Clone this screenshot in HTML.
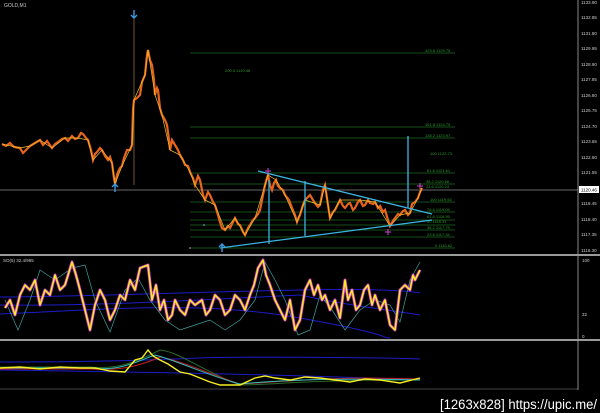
<!DOCTYPE html>
<html><head><meta charset="utf-8"><style>
html,body{margin:0;padding:0;background:#000;}
svg{display:block}
text{font-family:"Liberation Sans",sans-serif;}
</style></head><body>
<svg width="600" height="413" viewBox="0 0 600 413" xmlns="http://www.w3.org/2000/svg">
<rect width="600" height="413" fill="#000"/>
<text x="4" y="7" font-size="5" fill="#ccc">GOLD,M1</text>
<g stroke="#1f6b1f" stroke-width="0.8">
<line x1="190" y1="53" x2="455" y2="53"/>
<line x1="190" y1="127" x2="455" y2="127"/>
<line x1="190" y1="138" x2="455" y2="138"/>
<line x1="190" y1="173" x2="455" y2="173"/>
<line x1="190" y1="184" x2="455" y2="184"/>
<line x1="190" y1="202" x2="455" y2="202"/>
<line x1="190" y1="212" x2="455" y2="212"/>
<line x1="190" y1="220" x2="455" y2="220"/>
<line x1="190" y1="225" x2="455" y2="225"/>
<line x1="190" y1="230" x2="455" y2="230"/>
<line x1="190" y1="237" x2="455" y2="237"/>
<line x1="190" y1="248" x2="455" y2="248"/>
</g>
<g font-size="4" fill="#2e9a2e">
<text x="425" y="52">423.6 1129.75</text>
<text x="225" y="72">200.0 1120.46</text>
<text x="425" y="126">161.8 1124.75</text>
<text x="425" y="137">138.2 1123.97</text>
<text x="430" y="155">100 1122.73</text>
<text x="427" y="172">61.8 1121.61</text>
<text x="426" y="183">38.2 1120.66</text>
<text x="426" y="188">23.6 1120.24</text>
<text x="430" y="201">100 1119.53</text>
<text x="427" y="211">76.4 1119.09</text>
<text x="427" y="218">61.8 1118.55</text>
<text x="427" y="223">50 1118.31</text>
<text x="427" y="229">38.2 1117.79</text>
<text x="427" y="236">23.6 1117.34</text>
<text x="435" y="247">0 1116.62</text>
</g>
<line x1="0" y1="190" x2="578" y2="190" stroke="#8a8a8a" stroke-width="0.8"/>
<line x1="134" y1="12" x2="134" y2="185" stroke="#8a6a3a" stroke-width="0.8"/>
<polyline fill="none" stroke="#e8641c" stroke-width="2.2" stroke-linejoin="miter" points="2,144 6,146 10,143 14,147 20,148 23,153 27,149 30,146 35,143 40,140 43,145 47,141 52,148 55,144 58,142 62,139 65,138 68,141 72,136 75,139 78,138 81,133 83,134 86,138 88,140 91,150 93,160 95,154 97,152 100,148 102,150 105,156 108,160 110,157 112,163 114,178 115,184 117,175 118,172 120,168 122,166 124,158 127,150 130,150 132,145 133,110 134,100 137,98 140,95 142,82 145,75 147,55 148,50 150,60 152,65 154,80 155,95 157,88 158,90 160,108 162,115 165,120 167,125 169,140 170,150 172,140 175,145 178,150 180,155 183,160 185,165 188,166 190,172 193,178 195,185 198,176 200,180 203,195 205,200 208,192 210,195 213,202 215,205 218,215 220,222 222,228 225,230 228,226 230,228 233,222 235,218 238,224 240,225 243,232 245,235 248,228 250,225 253,220 255,218 258,214 260,210 263,195 265,185 267,178 268,175 270,185 272,190 274,183 276,180 278,186 280,188 283,190 285,195 289,200 292,208 295,215 297,222 299,217 300,215 303,205 305,200 308,197 310,195 313,200 315,203 318,207 320,205 323,190 325,185 328,205 330,218 333,212 335,210 338,204 340,200 343,206 345,208 348,204 350,203 353,210 355,208 358,202 360,200 363,206 365,205 368,200 370,203 373,204 375,202 378,208 380,206 383,212 385,210 388,220 390,226 393,221 395,218 398,214 400,215 403,211 405,210 408,215 410,213 412,204 415,202 418,198 420,192 422,188"/>
<polyline fill="none" stroke="#f0c030" stroke-width="0.7" points="2,144 20,148 30,146 40,140 52,148 65,138 78,138 88,140 93,160 102,150 112,163 115,184 122,166 132,145 134,100 145,75 148,50 155,95 162,115 170,150 180,155 190,172 195,185 205,200 215,205 225,230 235,218 245,235 255,218 265,185 268,175 276,180 285,195 297,222 305,200 320,205 325,185 330,218 340,200 360,200 375,202 390,226 400,215 410,213 418,198 422,188"/>
<g stroke="#3cb4e0" stroke-width="1.3">
<line x1="258" y1="171" x2="432" y2="214"/>
<line x1="220" y1="248" x2="432" y2="220"/>
<line x1="269" y1="180" x2="269" y2="244"/>
<line x1="305" y1="181" x2="305" y2="236"/>
<line x1="408" y1="136" x2="408" y2="208"/>
</g>
<g stroke="#3c9ae0" stroke-width="1.4" fill="none">
<path d="M134,10 V18 M131,15 L134,18 L137,15"/>
<path d="M115,184 V192 M112,187 L115,184 L118,187"/>
<path d="M222,244 V252 M219,247 L222,244 L225,247"/>
</g>
<g stroke="#d040d0" stroke-width="1"><path d="M265,171 h6 M268,168 v6 M385,232 h6 M388,229 v6 M417,186 h6 M420,183 v6"/></g>
<circle cx="204" cy="225" r="0.8" fill="#aaf"/><circle cx="190" cy="248" r="0.8" fill="#aaf"/>
<line x1="578" y1="0" x2="578" y2="390" stroke="#aaa" stroke-width="0.8"/>
<g font-size="4.5" fill="#ccc">
<text x="581" y="4">1133.90</text><text x="581" y="19">1132.85</text><text x="581" y="35">1131.80</text><text x="581" y="50">1129.95</text><text x="581" y="66">1128.90</text><text x="581" y="81">1127.85</text><text x="581" y="97">1126.80</text><text x="581" y="112">1125.75</text><text x="581" y="128">1124.70</text><text x="581" y="143">1123.65</text><text x="581" y="159">1122.60</text><text x="581" y="174">1121.55</text><text x="581" y="205">1119.45</text><text x="581" y="221">1118.40</text><text x="581" y="236">1117.35</text><text x="581" y="252">1116.30</text>
<text x="582" y="262">100</text><text x="582" y="316">32</text><text x="582" y="338">0</text>
</g>
<rect x="579" y="186" width="20" height="7" fill="#fff"/><text x="581" y="191.5" font-size="4.5" fill="#000">1120.46</text>
<rect x="0" y="254" width="600" height="2" fill="#9a9a9a"/>
<rect x="0" y="339" width="600" height="2" fill="#9a9a9a"/>
<line x1="0" y1="389" x2="578" y2="389" stroke="#888" stroke-width="0.6"/>
<text x="3" y="262" font-size="4.5" fill="#ccc">SO(5) 32.4/965</text>
<g fill="none" stroke="#1c1cc8" stroke-width="1">
<path d="M0,297 C100,296 200,292 300,290 S420,293 420,293"/>
<path d="M0,305 C100,306 200,300 300,295"/>
<path d="M0,314 C100,310 200,300 300,318 S380,338 390,338"/>
<path d="M300,295 C350,306 390,310 420,315"/>
</g>
<polyline fill="none" stroke="#40a0a0" stroke-width="0.7" points="5,300 18,330 30,300 40,270 55,280 72,268 85,265 95,300 110,332 125,290 138,278 150,300 165,320 180,330 195,325 210,320 225,330 240,320 255,300 265,262 275,280 285,300 298,335 310,330 320,295 332,310 345,330 360,310 375,300 390,305 400,322 410,280 420,262"/>
<polyline fill="none" stroke="#d030d0" stroke-width="3" stroke-linejoin="round" points="5,308 10,300 15,315 20,295 25,285 30,290 35,280 40,305 45,290 50,295 55,275 60,290 65,285 72,262 76,275 80,290 85,310 90,330 95,305 100,290 105,300 110,320 115,310 120,295 125,300 130,280 135,290 140,268 148,265 152,300 156,285 160,310 164,300 168,320 172,315 175,300 180,310 185,315 190,300 195,305 202,300 206,315 210,310 215,295 220,300 225,315 230,310 235,295 240,300 245,310 250,295 254,285 258,268 263,260 266,275 270,285 275,300 280,310 285,320 290,300 295,330 300,320 305,290 310,280 314,295 318,285 322,300 325,295 330,310 335,300 340,318 345,280 348,300 352,290 356,310 360,305 364,290 368,285 372,305 375,295 380,310 385,300 390,325 395,330 400,290 405,285 410,290 413,275 415,280 420,270"/>
<polyline fill="none" stroke="#f8f020" stroke-width="1.5" stroke-linejoin="round" points="5,308 10,300 15,315 20,295 25,285 30,290 35,280 40,305 45,290 50,295 55,275 60,290 65,285 72,262 76,275 80,290 85,310 90,330 95,305 100,290 105,300 110,320 115,310 120,295 125,300 130,280 135,290 140,268 148,265 152,300 156,285 160,310 164,300 168,320 172,315 175,300 180,310 185,315 190,300 195,305 202,300 206,315 210,310 215,295 220,300 225,315 230,310 235,295 240,300 245,310 250,295 254,285 258,268 263,260 266,275 270,285 275,300 280,310 285,320 290,300 295,330 300,320 305,290 310,280 314,295 318,285 322,300 325,295 330,310 335,300 340,318 345,280 348,300 352,290 356,310 360,305 364,290 368,285 372,305 375,295 380,310 385,300 390,325 395,330 400,290 405,285 410,290 413,275 415,280 420,270"/>
<g fill="none" stroke-width="1">
<path d="M0,362 C100,362 150,360 200,358 S400,358 420,359" stroke="#1c1cc8"/>
<path d="M0,370 C150,372 300,375 420,380" stroke="#1c1cc8"/>
<path d="M0,367 L90,367 C120,370 140,360 160,350 C180,352 200,370 240,385 C270,385 300,380 420,380" stroke="#2a6a2a"/>
<path d="M0,369 L90,369 C120,371 140,366 160,357 C180,360 220,378 240,384 C280,382 330,376 420,379" stroke="#c02020"/>
<path d="M0,368 L90,368 C120,372 140,360 155,355 C175,360 215,378 240,384 C280,380 330,378 420,380" stroke="#30c0c0"/>
<path d="M0,368 L20,367 L40,369 L60,367 L80,368 L95,368 L110,371 L125,372 L135,360 L142,358 L148,350 L153,356 L160,360 L168,364 L180,372 L190,374 L200,378 L210,382 L220,385 L240,385 L255,378 L265,376 L275,378 L290,380 L305,377 L320,378 L335,380 L350,382 L365,379 L380,380 L400,383 L412,380 L420,378" stroke="#f8f020" stroke-width="1.4"/>
</g>
<text x="440" y="409" font-size="13.5" fill="#fff" textLength="157" lengthAdjust="spacingAndGlyphs">[1263x828] https://upic.me/</text>
</svg>
</body></html>
